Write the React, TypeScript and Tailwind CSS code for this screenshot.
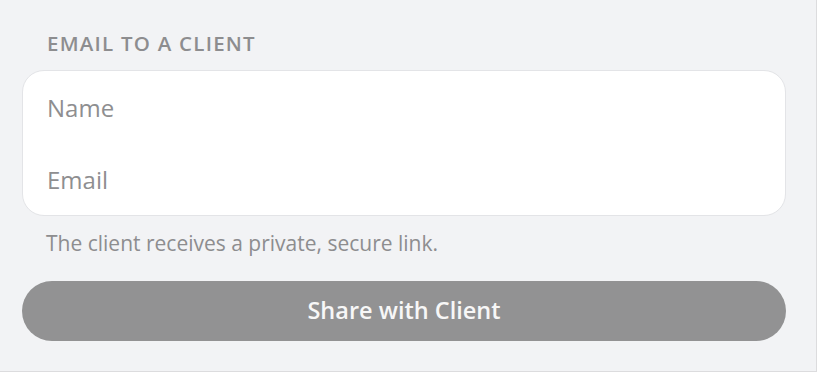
import React from "react";

export default function App() {
  return (
    <div
      className="w-[817px] h-[372px] bg-[#f2f3f5] border-r border-b border-[#dcdcde] pl-[22px] pr-[30px] pt-[28px]"
      style={{ fontFamily: '"Open Sans", sans-serif' }}
    >
      <div className="pl-[25px] text-[20.5px] leading-[31px] font-semibold tracking-[0.06em] text-[#8d8d8f] uppercase">
        Email to a client
      </div>
      <div className="mt-[11px] bg-white border border-[#e3e4e7] rounded-[22px] flex flex-col">
        <input
          placeholder="Name"
          className="h-[72px] px-[24px] bg-transparent outline-none text-[24px] text-[#333] placeholder:text-[#8e8e90]"
        />
        <input
          placeholder="Email"
          className="h-[72px] px-[24px] bg-transparent outline-none text-[24px] text-[#333] placeholder:text-[#8e8e90]"
        />
      </div>
      <div className="pl-[24px] mt-[13px] text-[21px] leading-[28px] text-[#8d8d8f]">
        The client receives a private, secure link.
      </div>
      <button className="mt-[24px] w-full h-[60px] rounded-full bg-[#929293] text-[#f7f7f7] text-[23.5px] font-semibold">
        Share with Client
      </button>
    </div>
  );
}
